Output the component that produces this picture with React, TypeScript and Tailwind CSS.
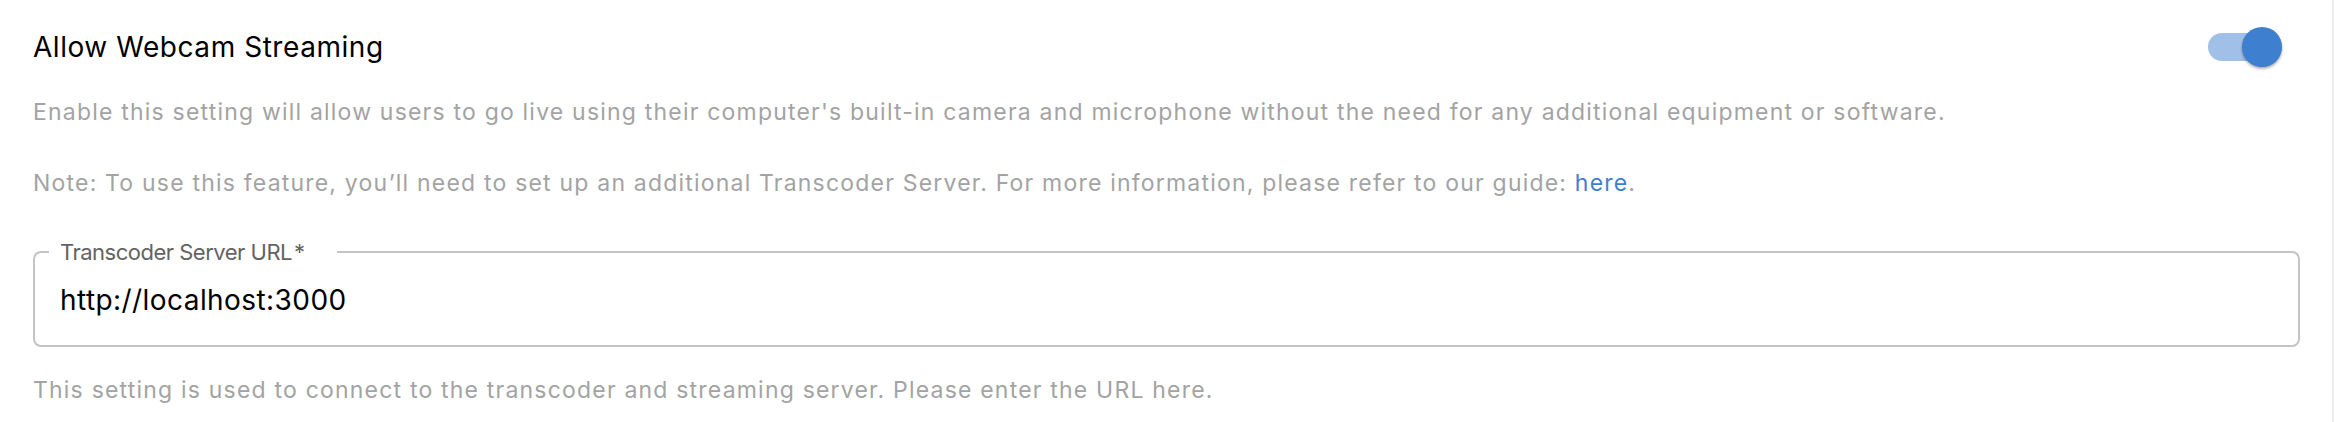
import React from "react";

export default function App() {
  return (
    <div className="w-full h-[422px] bg-white border-r-2 border-[#ececec] font-['Inter',sans-serif] antialiased">
      <div className="pl-[33px] pr-[32px] pt-[27px]">
        <div className="flex items-center justify-between h-[40px]">
          <div className="text-[28px] leading-[40px] tracking-[0.55px] text-[#000000]">Allow Webcam Streaming</div>
          <div className="relative w-[74px] h-[40px] mr-[18px] flex items-center">
            <div className="absolute left-0 w-[68px] h-[28px] rounded-full bg-[#a1c0e8]" />
            <div className="absolute right-0 w-[40px] h-[40px] rounded-full bg-[#3e7fd0] shadow-[0_2px_3px_rgba(0,0,0,0.25),0_1px_2px_rgba(0,0,0,0.12)]" />
          </div>
        </div>
        <p className="mt-[29px] text-[23px] leading-[32px] tracking-[1.2px] text-[#a3a3a3]">
          Enable this setting will allow users to go live using their computer's built-in camera and microphone without the need for any additional equipment or software.
        </p>
        <p className="mt-[39px] text-[23px] leading-[32px] tracking-[1.2px] text-[#a3a3a3]">
          Note: To use this feature, you’ll need to set up an additional Transcoder Server. For more information, please refer to our guide:{" "}
          <a className="text-[#3f7fcf]">here</a>.
        </p>
        <fieldset className="mt-[40px] border-2 border-[#c4c4c4] rounded-[8px] pl-[14px] pr-[14px] h-[108px]">
          <legend className="pl-[11px] pr-[32px] text-[22px] leading-[26px] tracking-[-0.5px] text-[#636363]">
            Transcoder Server URL<span className="ml-[2px]">*</span>
          </legend>
          <div className="mt-[15px] pl-[11px] text-[28px] leading-[40px] tracking-[0.43px] text-[#000000]">http://localhost:3000</div>
        </fieldset>
        <p className="mt-[27px] text-[23px] leading-[32px] tracking-[1.2px] text-[#a3a3a3]">
          This setting is used to connect to the transcoder and streaming server. Please enter the URL here.
        </p>
      </div>
    </div>
  );
}
